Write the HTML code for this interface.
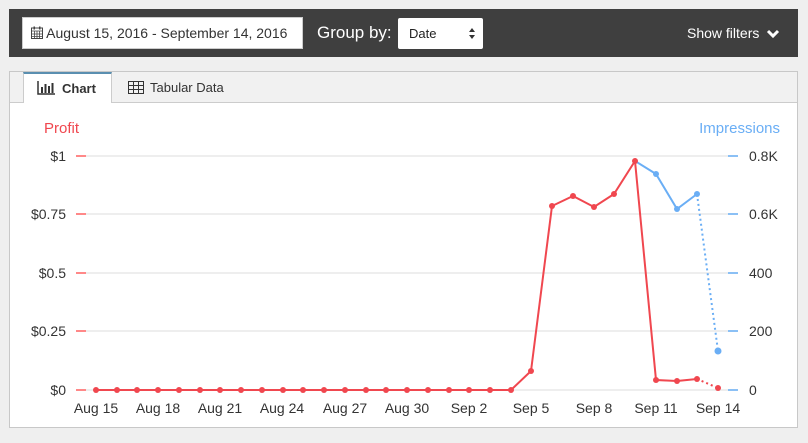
<!DOCTYPE html>
<html><head><style>
body{margin:0;width:808px;height:443px;background:#efefef;font-family:"Liberation Sans",sans-serif;position:relative;overflow:hidden}
.bar{position:absolute;left:9px;top:9px;width:789px;height:48px;background:#3f3f3f}
.date{position:absolute;left:22px;top:17px;width:281px;height:32px;background:#fff;border:1px solid #ccc;box-sizing:border-box;font-size:14px;color:#333;line-height:30px;padding-left:8px}
.gb{position:absolute;left:317px;top:23px;color:#fff;font-size:17px}
.sel{position:absolute;left:398px;top:18px;width:85px;height:31px;background:#fff;border-radius:2px;font-size:13px;line-height:31px;padding-left:11px;box-sizing:border-box;color:#222}
.sf{position:absolute;left:687px;top:25px;color:#fff;font-size:14px}
.panel{position:absolute;left:9px;top:71px;width:789px;height:357px;background:#fff;border:1px solid #c8c8c8;box-sizing:border-box}
.tabs{position:absolute;left:10px;top:72px;width:787px;height:30px;background:#f1f1f1;border-bottom:1px solid #ccc}
.tab1{position:absolute;left:23px;top:72px;width:89px;height:31px;background:#fff;border-top:2px solid #5a8fb0;border-left:1px solid #ccc;border-right:1px solid #ccc;box-sizing:border-box;font-size:13px;font-weight:bold;color:#333;line-height:30px;padding-left:39px}
.tab2{position:absolute;left:150px;top:80px;font-size:13px;color:#333}
</style></head><body>
<div class="bar"></div>
<div class="date"><svg width="12" height="13" style="vertical-align:-1px" viewBox="0 0 12 13"><rect x="0.5" y="2" width="11" height="10.5" fill="none" stroke="#444"/><path d="M0.5 5h11M0.5 8h11M0.5 10.5h11M3.5 5v7M6 5v7M8.5 5v7" stroke="#444" stroke-width="0.8"/><rect x="2.5" y="0.5" width="1.5" height="3" fill="#444"/><rect x="8" y="0.5" width="1.5" height="3" fill="#444"/></svg> August 15, 2016 - September 14, 2016</div>
<div class="gb">Group by:</div>
<div class="sel">Date<svg style="position:absolute;right:8px;top:10px" width="6" height="11"><path d="M0 4L3 0L6 4ZM0 7L3 11L6 7Z" fill="#333"/></svg></div>
<div class="sf">Show filters <svg width="14" height="10" style="vertical-align:-1px;margin-left:3px"><path d="M2 2L7 7L12 2" stroke="#fff" stroke-width="3" fill="none"/></svg></div>
<div class="panel"></div>
<div class="tabs"></div>
<div class="tab1"></div>
<svg style="position:absolute;left:37px;top:81px" width="19" height="14"><path d="M1 0v13h17" stroke="#333" stroke-width="1.5" fill="none"/><rect x="4" y="6" width="2" height="6" fill="#333"/><rect x="7.5" y="3" width="2" height="9" fill="#333"/><rect x="11" y="5" width="2" height="7" fill="#333"/><rect x="14.5" y="2" width="2" height="10" fill="#333"/></svg>
<div style="position:absolute;left:62px;top:81px;font-size:13px;font-weight:bold;color:#333">Chart</div>
<svg style="position:absolute;left:128px;top:81px" width="16" height="13"><rect x="0.5" y="0.5" width="15" height="12" fill="none" stroke="#333"/><path d="M0.5 4.5h15M0.5 8.5h15M5.5 0.5v12M10.5 0.5v12" stroke="#333"/></svg>
<div class="tab2">Tabular Data</div>
<svg style="position:absolute;left:0;top:0" width="808" height="443" font-family="Liberation Sans, sans-serif">
<g stroke="#eee" stroke-width="2"><path d="M86 156H728M86 214H728M86 273H728M86 331H728M86 390H728"/></g>
<g stroke="#f88" stroke-width="2"><path d="M76 156h10M76 214h10M76 273h10M76 331h10M76 390h10"/></g>
<g stroke="#8bc0f5" stroke-width="2"><path d="M728 156h10M728 214h10M728 273h10M728 331h10M728 390h10"/></g>
<g font-size="14" fill="#333" text-anchor="end"><text x="66" y="161">$1</text><text x="66" y="219">$0.75</text><text x="66" y="278">$0.5</text><text x="66" y="336">$0.25</text><text x="66" y="395">$0</text></g>
<g font-size="14" fill="#333"><text x="749" y="161">0.8K</text><text x="749" y="219">0.6K</text><text x="749" y="278">400</text><text x="749" y="336">200</text><text x="749" y="395">0</text></g>
<text x="44" y="133" font-size="15" fill="#f0474f">Profit</text>
<text x="780" y="133" font-size="15" fill="#6aaef5" text-anchor="end">Impressions</text>
<g font-size="14" fill="#333" text-anchor="middle"><text x="96" y="413">Aug 15</text><text x="158" y="413">Aug 18</text><text x="220" y="413">Aug 21</text><text x="282" y="413">Aug 24</text><text x="345" y="413">Aug 27</text><text x="407" y="413">Aug 30</text><text x="469" y="413">Sep 2</text><text x="531" y="413">Sep 5</text><text x="594" y="413">Sep 8</text><text x="656" y="413">Sep 11</text><text x="718" y="413">Sep 14</text></g>
<polyline fill="none" stroke="#6aaef5" stroke-width="2" points="635,161 656,174 677,209 697,194"/>
<path d="M697 194L718 351" stroke="#6aaef5" stroke-width="2" stroke-dasharray="2,3"/>
<g fill="#6aaef5"><circle cx="656" cy="174" r="3"/><circle cx="677" cy="209" r="3"/><circle cx="697" cy="194" r="3"/><circle cx="718" cy="351" r="3.5"/></g>
<polyline fill="none" stroke="#f0474f" stroke-width="2" points="96,390 511,390 531,371 552,206 573,196 594,207 614,194 635,161 656,380 677,381 697,379"/>
<path d="M697 379L718 388" stroke="#f0474f" stroke-width="2" stroke-dasharray="2,3"/>
<g fill="#f0474f">
<circle cx="96" cy="390" r="3"/><circle cx="117" cy="390" r="3"/><circle cx="137" cy="390" r="3"/><circle cx="158" cy="390" r="3"/><circle cx="179" cy="390" r="3"/><circle cx="200" cy="390" r="3"/><circle cx="220" cy="390" r="3"/><circle cx="241" cy="390" r="3"/><circle cx="262" cy="390" r="3"/><circle cx="283" cy="390" r="3"/><circle cx="303" cy="390" r="3"/><circle cx="324" cy="390" r="3"/><circle cx="345" cy="390" r="3"/><circle cx="366" cy="390" r="3"/><circle cx="386" cy="390" r="3"/><circle cx="407" cy="390" r="3"/><circle cx="428" cy="390" r="3"/><circle cx="449" cy="390" r="3"/><circle cx="469" cy="390" r="3"/><circle cx="490" cy="390" r="3"/><circle cx="511" cy="390" r="3"/>
<circle cx="531" cy="371" r="3"/><circle cx="552" cy="206" r="3"/><circle cx="573" cy="196" r="3"/><circle cx="594" cy="207" r="3"/><circle cx="614" cy="194" r="3"/><circle cx="635" cy="161" r="3"/><circle cx="656" cy="380" r="3"/><circle cx="677" cy="381" r="3"/><circle cx="697" cy="379" r="3"/><circle cx="718" cy="388" r="3"/></g>
</svg>
</body></html>
